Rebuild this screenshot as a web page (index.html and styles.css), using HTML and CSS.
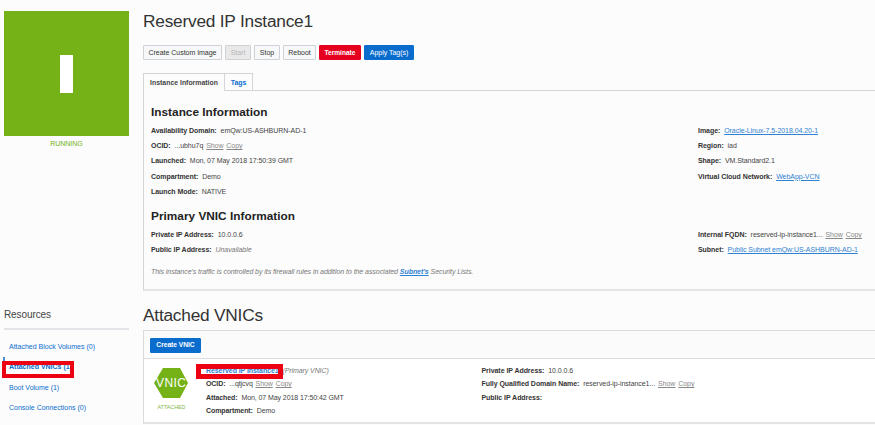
FILE: index.html
```html
<!DOCTYPE html>
<html lang="en">
<head>
<meta charset="utf-8">
<title>Reserved IP Instance1</title>
<link rel="stylesheet" href="styles.css">
</head>
<body>
<div class="page">
  <aside class="status">
    <div class="tile"><span class="tile-bar"></span></div>
    <div class="state">RUNNING</div>
  </aside>
  <main class="instance">
    <h1>Reserved IP Instance1</h1>
    <div class="actions">
      <button class="btn create">Create Custom Image</button>
      <button class="btn start" disabled>Start</button>
      <button class="btn stop">Stop</button>
      <button class="btn reboot">Reboot</button>
      <button class="btn danger">Terminate</button>
      <button class="btn primary tags-btn">Apply Tag(s)</button>
    </div>
    <nav class="tabs">
      <div class="tab active">Instance Information</div>
      <div class="tab tab-tags">Tags</div>
      <div class="tab-rest"></div>
    </nav>
    <section class="panel">
      <h2>Instance Information</h2>
      <div class="cols">
        <div>
          <p><b>Availability Domain:</b> emQw:US-ASHBURN-AD-1</p>
          <p><b>OCID:</b> ...ubhu7q <a class="muted">Show</a> <a class="muted">Copy</a></p>
          <p><b>Launched:</b> Mon, 07 May 2018 17:50:39 GMT</p>
          <p><b>Compartment:</b> Demo</p>
          <p><b>Launch Mode:</b> NATIVE</p>
        </div>
        <div>
          <p><b>Image:</b> <a>Oracle-Linux-7.5-2018.04.20-1</a></p>
          <p><b>Region:</b> iad</p>
          <p><b>Shape:</b> VM.Standard2.1</p>
          <p><b>Virtual Cloud Network:</b> <a>WebApp-VCN</a></p>
        </div>
      </div>
      <h2 class="second">Primary VNIC Information</h2>
      <div class="cols">
        <div>
          <p><b>Private IP Address:</b> 10.0.0.6</p>
          <p><b>Public IP Address:</b> <i>Unavailable</i></p>
        </div>
        <div>
          <p><b>Internal FQDN:</b> reserved-ip-instance1... <a class="muted">Show</a> <a class="muted">Copy</a></p>
          <p><b>Subnet:</b> <a>Public Subnet emQw:US-ASHBURN-AD-1</a></p>
        </div>
      </div>
      <p class="note">This instance's traffic is controlled by its firewall rules in addition to the associated <a><b>Subnet's</b></a> Security Lists.</p>
    </section>
  </main>
  <aside class="resources">
    <h3>Resources</h3>
    <ul>
      <li>Attached Block Volumes (0)</li>
      <li class="current"><b>Attached VNICs (1)</b><span class="marker"></span><span class="callout"></span></li>
      <li>Boot Volume (1)</li>
      <li>Console Connections (0)</li>
    </ul>
  </aside>
  <section class="vnics">
    <h1>Attached VNICs</h1>
    <div class="list">
      <div class="toolbar"><button class="btn primary new">Create VNIC</button></div>
      <div class="row">
        <div class="badge">
          <svg width="34" height="30" viewBox="0 0 34 30"><path d="M9 0H26L34 15L26 30H9L0 15Z" fill="#74b217"/><text x="17" y="19.2" text-anchor="middle" textLength="30">VNIC</text></svg>
          <div class="attached">ATTACHED</div>
        </div>
        <div class="facts first">
          <p class="name"><a><b>Reserved IP Instance1</b></a> <i>(Primary VNIC)</i><span class="callout"></span></p>
          <p><b>OCID:</b> ...qtjcvq <a class="muted">Show</a> <a class="muted">Copy</a></p>
          <p><b>Attached:</b> Mon, 07 May 2018 17:50:42 GMT</p>
          <p><b>Compartment:</b> Demo</p>
        </div>
        <div class="facts">
          <p><b>Private IP Address:</b> 10.0.0.6</p>
          <p><b>Fully Qualified Domain Name:</b> reserved-ip-instance1... <a class="muted">Show</a> <a class="muted">Copy</a></p>
          <p><b>Public IP Address:</b></p>
        </div>
      </div>
    </div>
  </section>
</div>
</body>
</html>
```
FILE: styles.css
```css
* { box-sizing: border-box; }
body { margin: 0; width: 875px; height: 425px; overflow: hidden; background: #fcfcfc; color: #444; font: 7px/15.2px "Liberation Sans", Arial, sans-serif; letter-spacing: -0.05px; }
h1, h2, h3, p, ul { margin: 0; padding: 0; }
h1 { font-size: 17.3px; line-height: 20px; font-weight: 400; color: #333; white-space: nowrap; letter-spacing: -0.22px; }
h2 { font-size: 11.8px; line-height: 16px; color: #222; letter-spacing: 0.02px; }
p, li { white-space: nowrap; }
b { color: #333; margin-right: 2px; }
a { color: #2f82d2; text-decoration: underline; }
a b { color: inherit; margin: 0; }
a.muted { color: #888; margin-left: 1px; }
i { color: #777; }

.page { display: grid; grid-template-columns: 125px 746px; grid-template-rows: 294px 120px; column-gap: 14px; padding: 11px 0 0 4px; }
.tile { width: 125px; height: 125px; background: #74b217; display: flex; align-items: center; justify-content: center; }
.tile-bar { width: 13px; height: 38px; background: #fff; }
.state { text-align: center; color: #74b217; line-height: 16px; }

.actions { display: flex; margin-top: 14px; height: 15px; }
.btn { font: 7px/12px "Liberation Sans", Arial, sans-serif; letter-spacing: -0.03px; padding: 0; height: 15px; border: 1px solid #cfd3d8; background: #f7f8f9; color: #333; border-radius: 1px; text-align: center; white-space: nowrap; }
.create { width: 79px; margin-right: 3px; }
.start { width: 26px; margin-right: 3px; background: #e9e9ea; color: #b5b5b5; }
.stop { width: 26px; margin-right: 3px; }
.reboot { width: 33px; margin-right: 3px; }
.danger { width: 42px; margin-right: 3px; background: #e6001f; border-color: #e6001f; color: #fff; font-weight: 700; font-size: 6.6px; }
.primary { background: #0a6dce; border-color: #0a6dce; color: #fff; }
.tags-btn { width: 50px; }

.tabs { display: flex; height: 18px; margin-top: 13px; }
.tab { border: 1px solid #d3d5d9; font-weight: 700; font-size: 6.9px; line-height: 17px; text-align: center; }
.active { width: 82px; border-bottom: 0; letter-spacing: 0; }
.tab-tags { width: 28px; border-left: 0; color: #0a6dce; }
.tab-rest { flex: 1; border-bottom: 1px solid #d3d5d9; }
.panel { height: 200px; border-left: 1px solid #d3d5d9; border-bottom: 2px solid #e5e5e6; padding: 13px 0 0 7px; }
.cols { display: grid; grid-template-columns: 547px 1fr; margin-top: 3px; }
.second { margin-top: 9px; }
.note { margin-top: 7px; font-style: italic; color: #777; letter-spacing: -0.06px; }

.resources h3 { font-size: 10px; line-height: 19px; font-weight: 400; height: 25px; border-bottom: 2px solid #e3e4e8; letter-spacing: -0.1px; }
.resources ul { list-style: none; padding: 9px 0 0 5px; }
.resources li { position: relative; height: 20.3px; color: #0a6dce; letter-spacing: 0; }
.current b { color: inherit; }
.marker { position: absolute; left: -6px; top: -2px; width: 2px; height: 5px; background: #4c91d8; }
.callout { position: absolute; border: 4px solid #ed0012; }
.current .callout { left: -7px; top: 2px; width: 72px; height: 17px; }
.list { margin-top: 5px; height: 94px; border: 1px solid #d9dbe0; border-right: 0; border-bottom: 2px solid #e3e4e6; background: #fff; }
.toolbar { height: 28px; padding: 6px 0 0 6px; border-bottom: 1px solid #dcdde2; background: #fbfbfb; }
.new { width: 51px; font-weight: 700; font-size: 6.7px; }
.row { display: grid; grid-template-columns: 62px 275.5px 1fr; }
.badge { padding: 9px 0 0 10px; width: 47px; }
.badge svg { display: block; }
.badge text { font-size: 12px; fill: #fff; letter-spacing: 0; }
.attached { font-size: 5.4px; line-height: 15px; text-align: center; color: #84b64a; width: 35px; margin-top: 2px; }
.facts { padding-top: 5px; line-height: 13.4px; }
.first { letter-spacing: -0.08px; }
.name { position: relative; }
.name i { margin-left: 2px; }
.name .callout { left: -10px; top: 0; width: 87px; height: 15px; border-width: 5px; }
```
